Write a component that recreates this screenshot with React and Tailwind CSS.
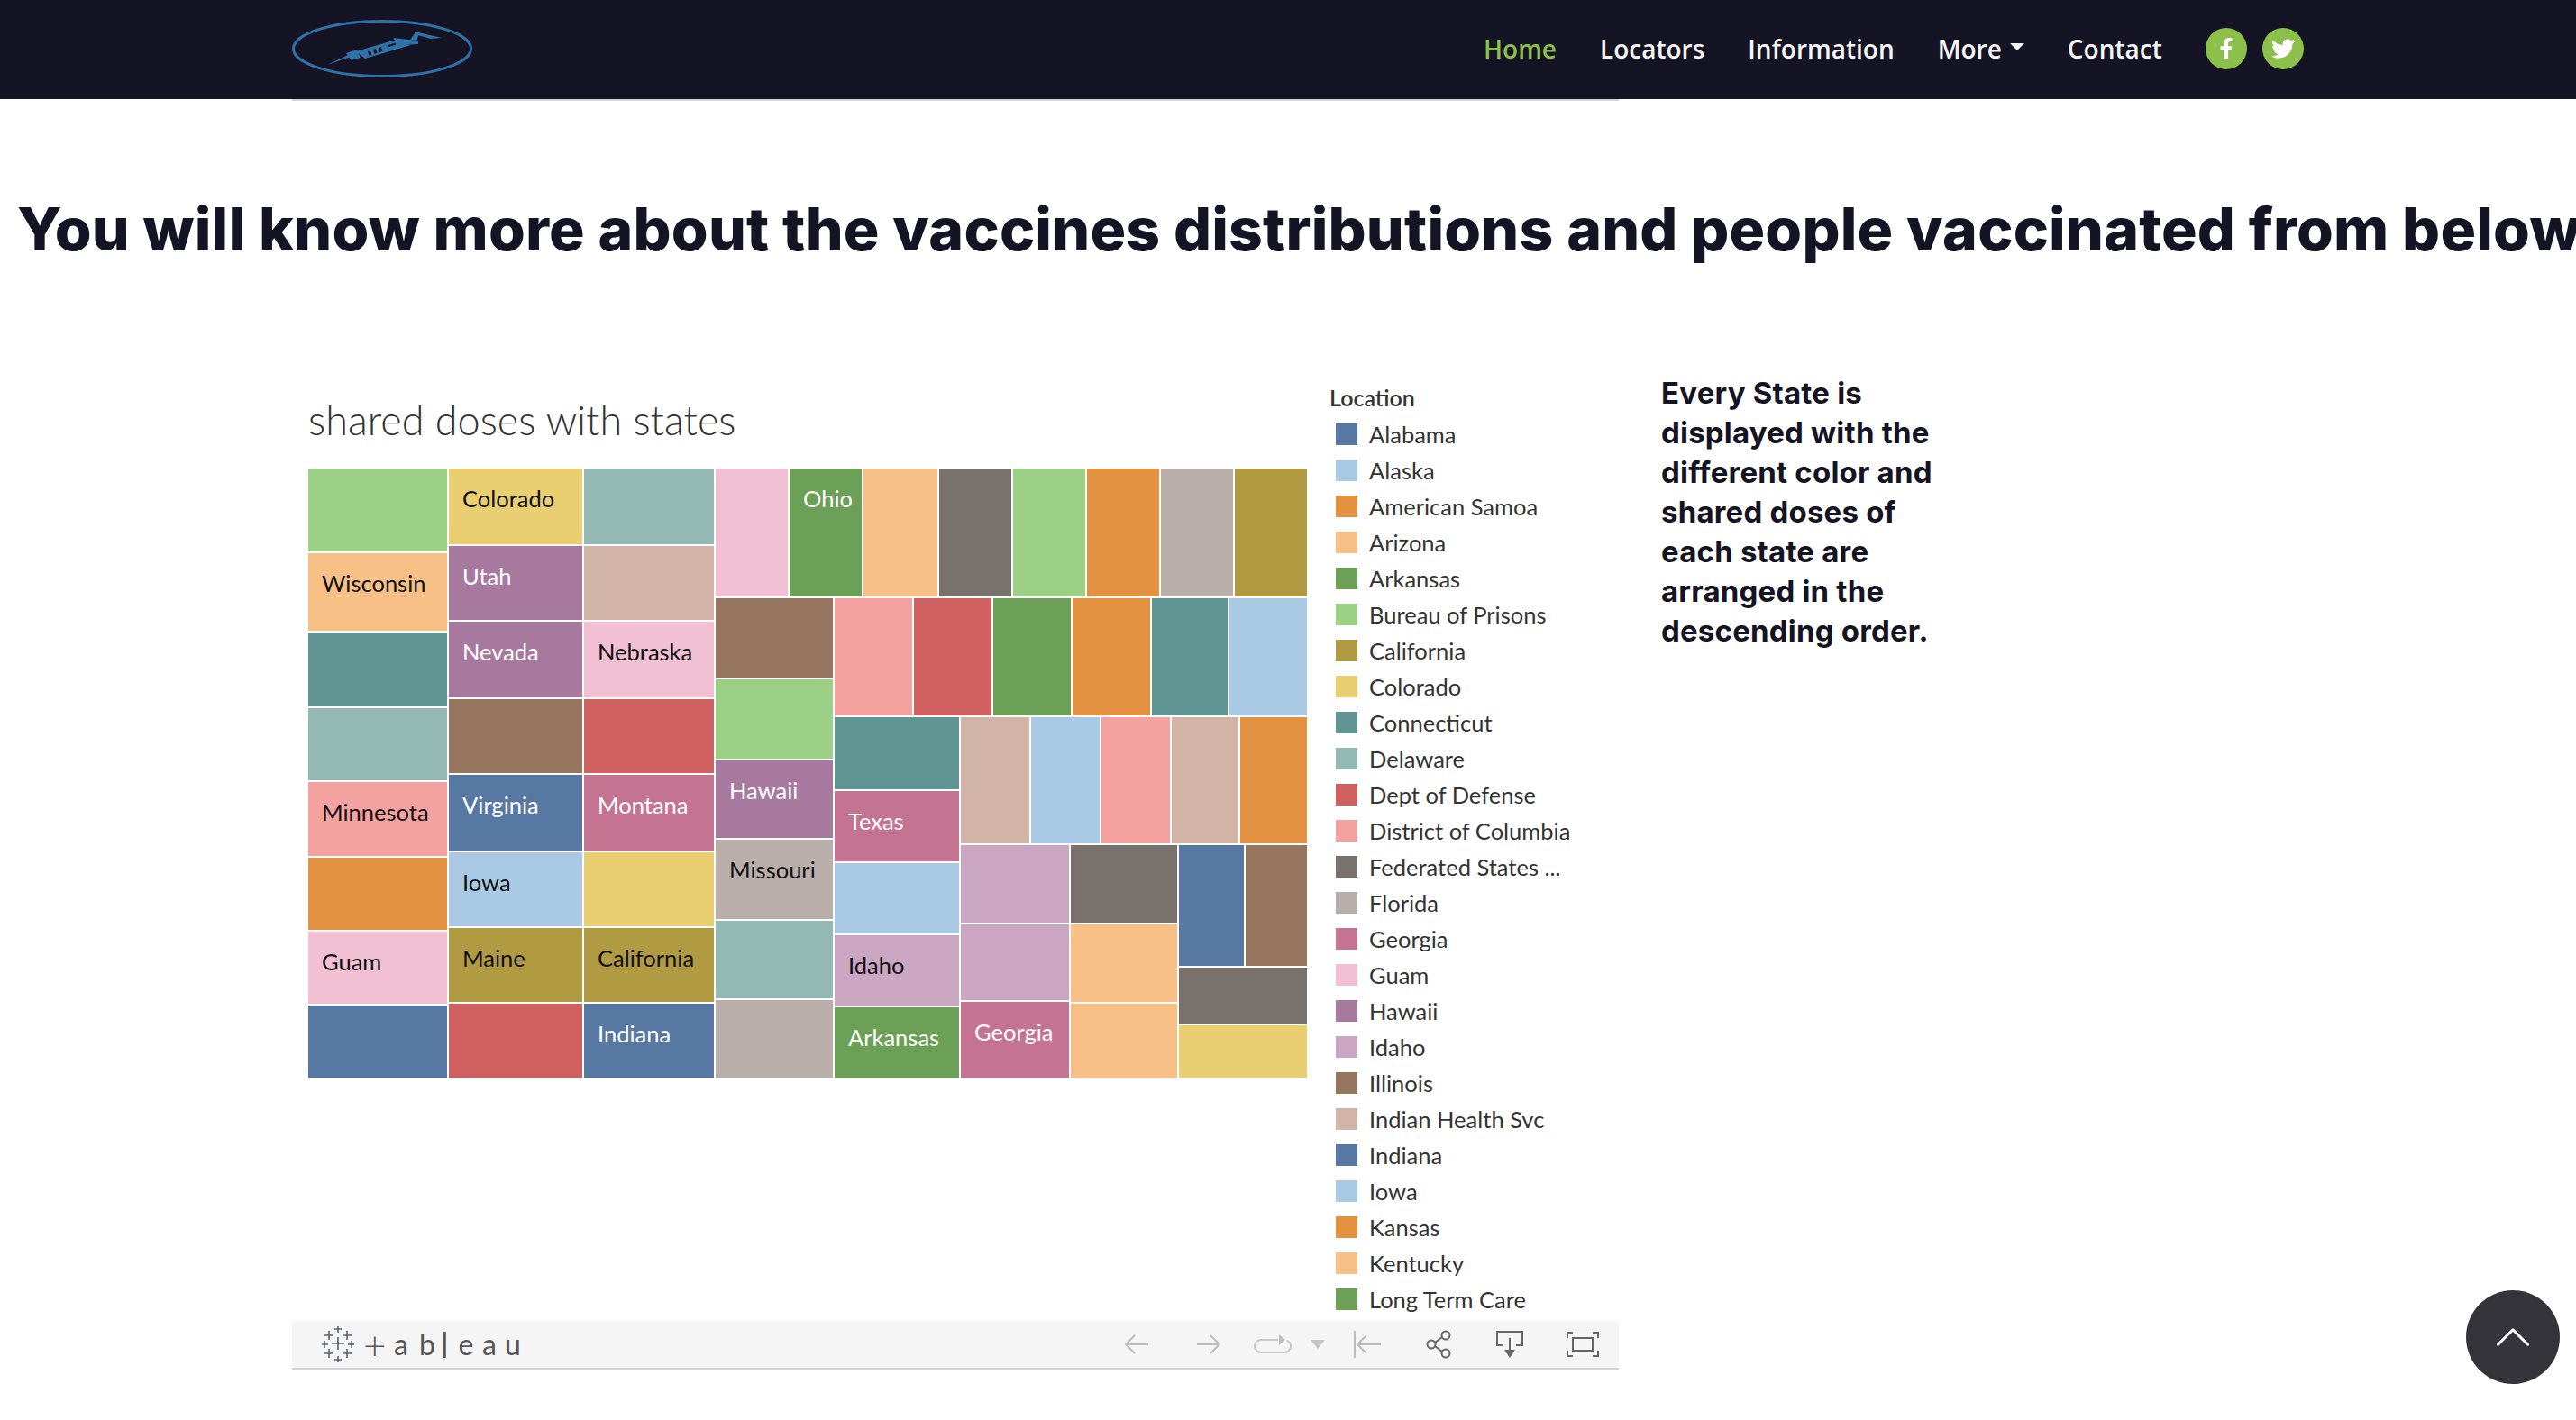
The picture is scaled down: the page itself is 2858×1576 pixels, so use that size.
import { ChevronUp } from "lucide-react";
import { FaFacebookF, FaTwitter } from "react-icons/fa";

// tableau 20 colours used by the treemap and the legend
const blue = "bg-[#5778a2]";
const skyblue = "bg-[#a9c9e4]";
const orange = "bg-[#e29240]";
const peach = "bg-[#f6c087]";
const green = "bg-[#6ba056]";
const lime = "bg-[#9cd087]";
const olive = "bg-[#b09a42]";
const yellow = "bg-[#e9cf72]";
const teal = "bg-[#5f9592]";
const mint = "bg-[#94b9b5]";
const red = "bg-[#d05f5f]";
const salmon = "bg-[#f3a2a0]";
const slate = "bg-[#79716c]";
const stone = "bg-[#b9aeaa]";
const rose = "bg-[#c47491]";
const pink = "bg-[#f1c0d2]";
const purple = "bg-[#a8799e]";
const lilac = "bg-[#cba6c3]";
const brown = "bg-[#977660]";
const tan = "bg-[#d1b4a6]";

const legend = [
  ["Alabama", blue],
  ["Alaska", skyblue],
  ["American Samoa", orange],
  ["Arizona", peach],
  ["Arkansas", green],
  ["Bureau of Prisons", lime],
  ["California", olive],
  ["Colorado", yellow],
  ["Connecticut", teal],
  ["Delaware", mint],
  ["Dept of Defense", red],
  ["District of Columbia", salmon],
  ["Federated States ...", slate],
  ["Florida", stone],
  ["Georgia", rose],
  ["Guam", pink],
  ["Hawaii", purple],
  ["Idaho", lilac],
  ["Illinois", brown],
  ["Indian Health Svc", tan],
  ["Indiana", blue],
  ["Iowa", skyblue],
  ["Kansas", orange],
  ["Kentucky", peach],
  ["Long Term Care", green],
];

const vizFont = "font-['Lato','Open_Sans',sans-serif]";

function Cell({ c, label, dark, className = "" }) {
  return (
    <div className={`${c} ${className} shrink-0 overflow-hidden whitespace-nowrap pl-[15px] pt-[19px] text-[25.5px] leading-[28px] ${dark ? "text-[#111]" : "text-white"}`}>
      {label}
    </div>
  );
}

function Logo() {
  return (
    <svg width="200" height="64" viewBox="0 0 200 64" fill="none" className="shrink-0">
      <ellipse cx="100" cy="32" rx="98.5" ry="30.5" stroke="#2f72a8" strokeWidth="3" />
      <g fill="#2f72a8">
        <path d="M39 50 L62 39 L64 41.500 Z" />
        <path d="M60 37 L72 33 L76 42 L66 45 Z" />
        <path d="M71 35 L112 23 L132 28 L81 43 Z" />
        <path d="M112 20 L140 23 L140 27 L118 28 Z" />
        <path d="M131 22 L136 15 L141 16 L138 23 Z" />
        <path d="M136 13 L166 20 L154 21 L136 16 Z" />
      </g>
      <g fill="#151424">
        <rect x="84" y="35" width="3" height="5" transform="rotate(-18 84 35)" />
        <rect x="90" y="33" width="3" height="5" transform="rotate(-18 90 33)" />
        <rect x="96" y="31" width="3" height="5" transform="rotate(-18 96 31)" />
        <rect x="107" y="28" width="8" height="2" transform="rotate(-18 107 28)" />
      </g>
    </svg>
  );
}

function TableauMark() {
  const crosses = [
    [18, 3, 4], [8, 10, 5], [28, 10, 5], [3, 20, 4], [18, 19, 7], [33, 20, 4],
    [8, 30, 5], [28, 30, 5], [18, 37, 4],
  ];
  return (
    <svg width="36" height="40" viewBox="0 0 36 40" stroke="#5c6066" strokeWidth="1.6" className="shrink-0">
      {crosses.map(([x, y, r], i) => (
        <path key={i} d={`M${x - r} ${y}H${x + r}M${x} ${y - r}V${y + r}`} />
      ))}
    </svg>
  );
}

function Toolbar() {
  return (
    <div className="flex h-[54px] w-[1472px] items-center border-b-2 border-[#d4d4d4] bg-[#f5f5f5]">
      <div className="ml-[33px]"><TableauMark /></div>
      <div className="ml-[10px] flex items-center font-['Lato',sans-serif] text-[32px] leading-none text-[#555]">
        <span className="w-[24px] text-center text-[44px] font-light">+</span>
        <span className="ml-[8px] w-[20px] text-center">a</span>
        <span className="ml-[9px] w-[20px] text-center">b</span>
        <span className="ml-[1px] w-[16px] text-center text-[38px]">l</span>
        <span className="ml-[6px] w-[20px] text-center">e</span>
        <span className="ml-[6px] w-[20px] text-center">a</span>
        <span className="ml-[6px] w-[20px] text-center">u</span>
      </div>
      <div className="ml-auto flex items-center">
        {/* back */}
        <svg width="26" height="22" viewBox="0 0 26 22" fill="none" stroke="#bdbdbd" strokeWidth="2"><path d="M26 11H2M11 1L1 11l10 10" /></svg>
        {/* forward */}
        <svg width="26" height="22" viewBox="0 0 26 22" fill="none" stroke="#bdbdbd" strokeWidth="2" className="ml-[54px]"><path d="M0 11h24M15 1l10 10-10 10" /></svg>
        {/* replay */}
        <svg width="44" height="22" viewBox="0 0 44 22" fill="none" className="ml-[36px]">
          <path d="M28 6H9a7 7 0 0 0 0 14h26a7 7 0 0 0 7-7c0-3-1.500-5-4-6" stroke="#c8c8c8" strokeWidth="2" />
          <path d="M29 0l7 6-7 6z" fill="#bdbdbd" />
        </svg>
        <svg width="16" height="10" viewBox="0 0 16 10" className="ml-[20px]"><path d="M0 0h16L8 10z" fill="#c4c4c4" /></svg>
        {/* back to start */}
        <svg width="30" height="30" viewBox="0 0 30 30" fill="none" stroke="#bdbdbd" strokeWidth="2" className="ml-[32px]"><path d="M1 0v30M30 15H5M14 5L4 15l10 10" /></svg>
        {/* share */}
        <svg width="28" height="32" viewBox="0 0 28 32" fill="none" stroke="#666" strokeWidth="2" className="ml-[50px]">
          <circle cx="6" cy="16" r="4.500" /><circle cx="22" cy="6" r="4.500" /><circle cx="22" cy="26" r="4.500" />
          <path d="M10 14l8-6M10 18l8 6" />
        </svg>
        {/* download */}
        <svg width="30" height="30" viewBox="0 0 30 30" fill="none" className="ml-[50px]">
          <path d="M8 16H1V1h28v15h-7" stroke="#666" strokeWidth="2" />
          <path d="M15 8v14" stroke="#666" strokeWidth="2" />
          <path d="M9 21h12l-6 9z" fill="#666" />
        </svg>
        {/* fullscreen */}
        <svg width="36" height="28" viewBox="0 0 36 28" fill="none" stroke="#666" strokeWidth="2" className="ml-[48px] mr-[22px]">
          <path d="M1 7V1h6M29 1h6v6M35 21v6h-6M7 27H1v-6" />
          <rect x="7" y="7" width="22" height="14" />
        </svg>
      </div>
    </div>
  );
}

function Treemap() {
  return (
    <div className={`flex gap-[2px] ${vizFont}`}>
      <div className="flex w-[154px] flex-col gap-[2px]">
        <Cell c={lime} className="h-[92px]" />
        <Cell c={peach} className="h-[86px]" label="Wisconsin" dark />
        <Cell c={teal} className="h-[82px]" />
        <Cell c={mint} className="h-[80px]" />
        <Cell c={salmon} className="h-[82px]" label="Minnesota" dark />
        <Cell c={orange} className="h-[80px]" />
        <Cell c={pink} className="h-[80px]" label="Guam" dark />
        <Cell c={blue} className="h-[80px]" />
      </div>
      <div className="flex w-[148px] flex-col gap-[2px]">
        <Cell c={yellow} className="h-[84px]" label="Colorado" dark />
        <Cell c={purple} className="h-[82px]" label="Utah" />
        <Cell c={purple} className="h-[84px]" label="Nevada" />
        <Cell c={brown} className="h-[82px]" />
        <Cell c={blue} className="h-[84px]" label="Virginia" />
        <Cell c={skyblue} className="h-[82px]" label="Iowa" dark />
        <Cell c={olive} className="h-[82px]" label="Maine" dark />
        <Cell c={red} className="h-[82px]" />
      </div>
      <div className="flex w-[144px] flex-col gap-[2px]">
        <Cell c={mint} className="h-[84px]" />
        <Cell c={tan} className="h-[82px]" />
        <Cell c={pink} className="h-[84px]" label="Nebraska" dark />
        <Cell c={red} className="h-[82px]" />
        <Cell c={rose} className="h-[84px]" label="Montana" />
        <Cell c={yellow} className="h-[82px]" />
        <Cell c={olive} className="h-[82px]" label="California" dark />
        <Cell c={blue} className="h-[82px]" label="Indiana" />
      </div>
      <div className="flex w-[656px] flex-col gap-[2px]">
        <div className="flex h-[142px] gap-[2px]">
          <Cell c={pink} className="w-[80px]" />
          <Cell c={green} className="w-[80px]" label="Ohio" />
          <Cell c={peach} className="w-[82px]" />
          <Cell c={slate} className="w-[80px]" />
          <Cell c={lime} className="w-[80px]" />
          <Cell c={orange} className="w-[80px]" />
          <Cell c={stone} className="w-[80px]" />
          <Cell c={olive} className="w-[80px]" />
        </div>
        <div className="flex gap-[2px]">
          <div className="flex w-[130px] flex-col gap-[2px]">
            <Cell c={brown} className="h-[88px]" />
            <Cell c={lime} className="h-[88px]" />
            <Cell c={purple} className="h-[86px]" label="Hawaii" />
            <Cell c={stone} className="h-[88px]" label="Missouri" dark />
            <Cell c={mint} className="h-[86px]" />
            <Cell c={stone} className="h-[86px]" />
          </div>
          <div className="flex w-[524px] flex-col gap-[2px]">
            <div className="flex h-[130px] gap-[2px]">
              <Cell c={salmon} className="w-[86px]" />
              <Cell c={red} className="w-[86px]" />
              <Cell c={green} className="w-[86px]" />
              <Cell c={orange} className="w-[86px]" />
              <Cell c={teal} className="w-[84px]" />
              <Cell c={skyblue} className="w-[86px]" />
            </div>
            <div className="flex gap-[2px]">
              <div className="flex w-[138px] flex-col gap-[2px]">
                <Cell c={teal} className="h-[80px]" />
                <Cell c={rose} className="h-[78px]" label="Texas" />
                <Cell c={skyblue} className="h-[78px]" />
                <Cell c={lilac} className="h-[78px]" label="Idaho" dark />
                <Cell c={green} className="h-[78px]" label="Arkansas" />
              </div>
              <div className="flex w-[384px] flex-col gap-[2px]">
                <div className="flex h-[140px] gap-[2px]">
                  <Cell c={tan} className="w-[76px]" />
                  <Cell c={skyblue} className="w-[76px]" />
                  <Cell c={salmon} className="w-[76px]" />
                  <Cell c={tan} className="w-[74px]" />
                  <Cell c={orange} className="w-[74px]" />
                </div>
                <div className="flex gap-[2px]">
                  <div className="flex w-[120px] flex-col gap-[2px]">
                    <Cell c={lilac} className="h-[86px]" />
                    <Cell c={lilac} className="h-[84px]" />
                    <Cell c={rose} className="h-[84px]" label="Georgia" />
                  </div>
                  <div className="flex w-[118px] flex-col gap-[2px]">
                    <Cell c={slate} className="h-[86px]" />
                    <Cell c={peach} className="h-[86px]" />
                    <Cell c={peach} className="h-[82px]" />
                  </div>
                  <div className="flex w-[142px] flex-col gap-[2px]">
                    <div className="flex h-[134px] gap-[2px]">
                      <Cell c={blue} className="w-[72px]" />
                      <Cell c={brown} className="w-[68px]" />
                    </div>
                    <Cell c={slate} className="h-[62px]" />
                    <Cell c={yellow} className="h-[58px]" />
                  </div>
                </div>
              </div>
            </div>
          </div>
        </div>
      </div>
    </div>
  );
}

export default function App() {
  return (
    <div className="relative h-[1576px] overflow-hidden bg-white">
      <nav className="flex h-[110px] items-center bg-[#151424] pb-[2px] pl-[324px] font-['Open_Sans',sans-serif] text-[28px] font-semibold text-[#f5f5f5]">
        <Logo />
        <a className="ml-[1122px] text-[#8cc04b]">Home</a>
        <a className="ml-[48px]">Locators</a>
        <a className="ml-[48px]">Information</a>
        <a className="ml-[48px]">More</a>
        <span className="ml-[9px] mb-[4px] h-0 w-0 border-x-[8px] border-t-[8px] border-x-transparent border-t-[#f5f5f5]" />
        <a className="ml-[48px]">Contact</a>
        <a className="ml-[48px] flex h-[46px] w-[46px] items-center justify-center rounded-full bg-[#8cc04b] text-[24px] text-white"><FaFacebookF /></a>
        <a className="ml-[17px] flex h-[46px] w-[46px] items-center justify-center rounded-full bg-[#8cc04b] text-[26px] text-white"><FaTwitter /></a>
      </nav>
      <div className="ml-[324px] h-[2px] w-[1472px] bg-[#d4d4d4]" />

      <h1 className="ml-[19px] mt-[104px] whitespace-nowrap font-['Inter',sans-serif] text-[66px] font-extrabold leading-[76px] tracking-[0.2px] text-[#151424]">
        You will know more about the vaccines distributions and people vaccinated from below
      </h1>

      <div className="ml-[324px] mt-[122px] flex items-start">
        <div className="mt-[4px] flex w-[1472px] flex-col">
          <div className="flex h-[1048px] items-start">
            <div className="w-[1126px] pl-[18px]">
              <div className="mt-[18px] h-[84px] font-['Lato',sans-serif] text-[45px] font-light leading-[60px] text-[#333]">shared doses with states</div>
              <Treemap />
            </div>
            <div className={`ml-[25px] mt-[6px] ${vizFont} text-[#333]`}>
              <div className="mb-[4px] h-[34px] text-[25px] font-semibold leading-[34px]">Location</div>
              {legend.map(([name, c]) => (
                <div key={name} className="flex h-[40px] items-center pl-[7px]">
                  <span className={`${c} h-[24px] w-[24px] shrink-0`} />
                  <span className="ml-[13px] whitespace-nowrap text-[25.5px]">{name}</span>
                </div>
              ))}
            </div>
          </div>
          <Toolbar />
        </div>
        <p className="ml-[47px] w-[340px] font-['Inter',sans-serif] text-[33px] font-bold leading-[44px] tracking-[0.2px] text-[#151424]">
          Every State is displayed with the different color and shared doses of each state are arranged in the descending order.
        </p>
      </div>

      <button className="absolute left-[2736px] top-[1432px] flex h-[104px] w-[104px] items-center justify-center rounded-full bg-[#35343a] text-white">
        <ChevronUp size={66} strokeWidth={1.1} />
      </button>
    </div>
  );
}
